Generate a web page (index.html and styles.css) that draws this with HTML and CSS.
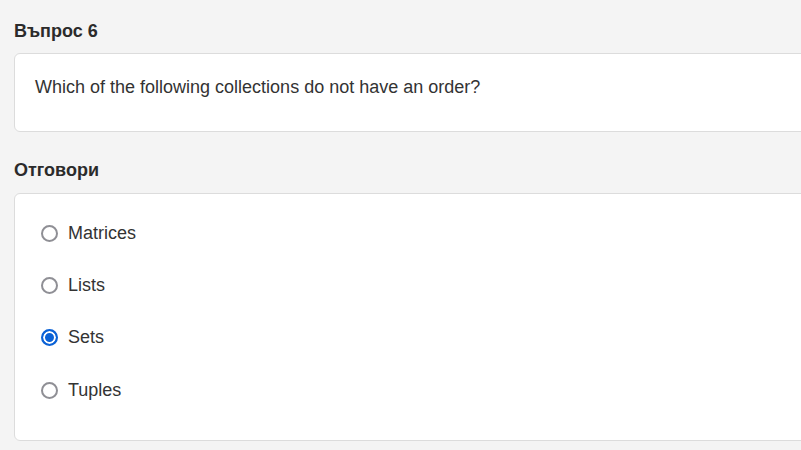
FILE: index.html
```html
<!DOCTYPE html>
<html lang="bg">
<head>
<meta charset="utf-8">
<link rel="stylesheet" href="styles.css">
</head>
<body>
<main class="quiz">
  <h2 class="section-title first">Въпрос 6</h2>
  <div class="card question">Which of the following collections do not have an order?</div>
  <h2 class="section-title second">Отговори</h2>
  <div class="card answers">
    <label class="option"><input type="radio" name="a" class="radio"><span>Matrices</span></label>
    <label class="option"><input type="radio" name="a" class="radio"><span>Lists</span></label>
    <label class="option"><input type="radio" name="a" class="radio" checked><span>Sets</span></label>
    <label class="option"><input type="radio" name="a" class="radio"><span>Tuples</span></label>
  </div>
</main>
</body>
</html>
```

FILE: styles.css
```css
html, body {
  margin: 0;
  padding: 0;
  background: #f4f4f4;
  overflow: hidden;
}
body {
  font-family: "Liberation Sans", Arial, sans-serif;
  color: #333;
}
.quiz {
  padding: 21px 0 0 14px;
  width: 830px;
}
.section-title {
  margin: 0;
  font-size: 18px;
  line-height: 21px;
  font-weight: bold;
  color: #2b2b2b;
}
.section-title.first { margin-bottom: 11px; }
.section-title.second { margin-top: 28px; margin-bottom: 12px; }
.card {
  background: #fff;
  border: 1px solid #dcdcdc;
  border-radius: 6px;
}
.question {
  padding: 23px 20px 33px 20px;
  font-size: 18px;
  line-height: 21px;
}
.answers {
  padding: 13px 20px 24px 26px;
  display: flex;
  flex-direction: column;
}
.option {
  display: flex;
  align-items: center;
  height: 52.3px;
  gap: 10px;
  font-size: 18px;
  cursor: pointer;
}
.radio {
  appearance: none;
  -webkit-appearance: none;
  margin: 0;
  width: 17px;
  height: 17px;
  border: 2px solid #8f8f95;
  border-radius: 50%;
  background: #fff;
  box-sizing: border-box;
}
.radio:checked {
  border-color: #0b62d6;
  background: #0b62d6;
  box-shadow: inset 0 0 0 2px #fff;
}
```
